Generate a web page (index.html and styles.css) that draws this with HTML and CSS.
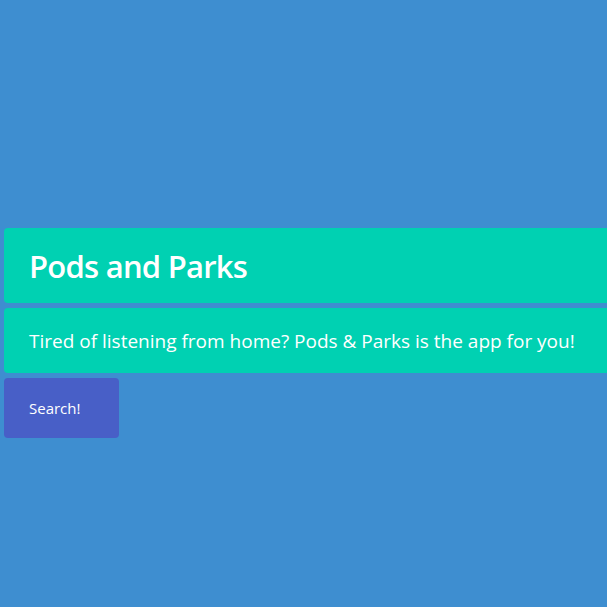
FILE: index.html
```html
<!DOCTYPE html>
<html>
<head>
<meta charset="utf-8">
<link rel="stylesheet" href="styles.css">
</head>
<body>
<main class="page">
  <section class="box hero-title">
    <h1 class="title">Pods and Parks</h1>
  </section>
  <section class="box hero-sub">
    <p class="subtitle">Tired of listening from home? Pods &amp; Parks is the app for you!</p>
  </section>
  <button class="search-btn">Search!</button>
</main>
</body>
</html>
```

FILE: styles.css
```css
html, body {
  margin: 0;
  padding: 0;
  background: #3e8ed0;
  overflow: hidden;
  height: 100%;
}
body {
  font-family: "Open Sans", "Noto Sans", sans-serif;
  color: #fff;
}
.page {
  padding: 228px 0 0 4px;
  width: 640px;
  display: flex;
  flex-direction: column;
  align-items: flex-start;
  gap: 5px;
}
.box {
  background: #00d1b2;
  border-radius: 4px;
  box-sizing: border-box;
  width: 100%;
  padding: 0 25px;
  display: flex;
  align-items: center;
}
.hero-title {
  height: 75px;
}
.hero-sub {
  height: 65px;
}
.title {
  margin: 0;
  font-size: 31px;
  font-weight: 600;
  letter-spacing: -0.75px;
}
.subtitle {
  margin: 0;
  font-size: 19px;
  letter-spacing: 0;
}
.search-btn {
  width: 115px;
  height: 60px;
  border: none;
  border-radius: 4px;
  background: #485fc7;
  color: #fff;
  font-family: "Open Sans", "Noto Sans", sans-serif;
  font-size: 15px;
  text-align: left;
  padding: 0 0 0 25px;
}
```
